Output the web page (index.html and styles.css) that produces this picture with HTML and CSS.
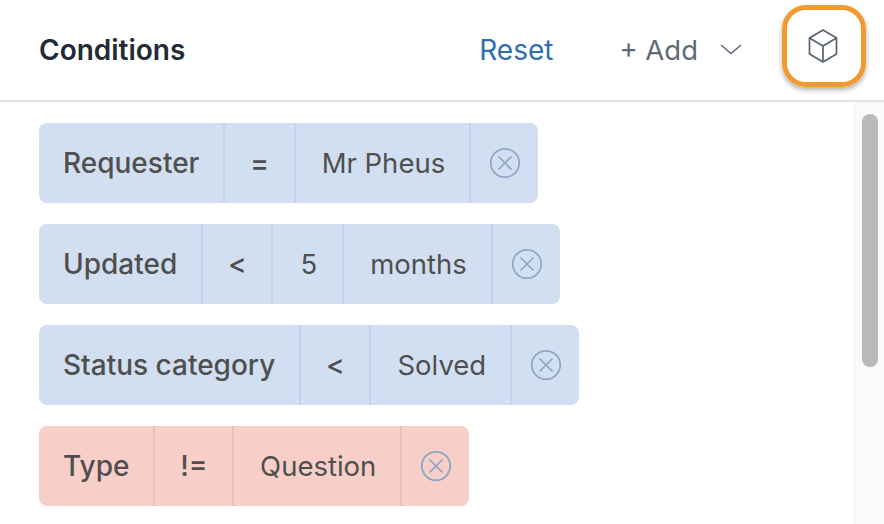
FILE: index.html
```html
<!DOCTYPE html>
<html lang="en">
<head>
  <meta charset="UTF-8">
  <title>Conditions</title>
  <link rel="stylesheet" href="styles.css">
</head>
<body>
  <div class="header">
    <h1 class="title">Conditions</h1>
    <a class="reset-btn">Reset</a>
    <a class="add-btn">+ Add</a>
    <svg class="chevron" width="24" height="14" viewBox="0 0 24 14"><path d="M2 2l10 8.5L22 2" fill="none" stroke="#5f6b76" stroke-width="1.6"/></svg>
    <div class="cube-btn">
      <svg width="32" height="34" viewBox="0 0 32 34" fill="none" stroke="#566472" stroke-width="1.7" stroke-linejoin="round">
        <path d="M16 1l13.5 8v16L16 33 2.500 25V9z"/>
        <path d="M2.500 9L16 17l13.500-8M16 17v16"/>
      </svg>
    </div>
  </div>

  <div class="body">
    <div class="conditions">
      <div class="condition">
        <span class="seg seg-field">Requester</span>
        <span class="seg seg-op">=</span>
        <span class="seg seg-value">Mr Pheus</span>
        <span class="seg seg-close"><svg width="32" height="32" viewBox="0 0 32 32" fill="none" stroke="#8ea7c4" stroke-width="1.700"><circle cx="16" cy="16" r="14.200"/><path d="M9.500 9.500l13 13M22.500 9.500l-13 13"/></svg></span>
      </div>
      <div class="condition">
        <span class="seg seg-field">Updated</span>
        <span class="seg seg-op">&lt;</span>
        <span class="seg seg-value seg-num">5</span>
        <span class="seg seg-value">months</span>
        <span class="seg seg-close"><svg width="32" height="32" viewBox="0 0 32 32" fill="none" stroke="#8ea7c4" stroke-width="1.700"><circle cx="16" cy="16" r="14.200"/><path d="M9.500 9.500l13 13M22.500 9.500l-13 13"/></svg></span>
      </div>
      <div class="condition">
        <span class="seg seg-field">Status category</span>
        <span class="seg seg-op">&lt;</span>
        <span class="seg seg-value">Solved</span>
        <span class="seg seg-close"><svg width="32" height="32" viewBox="0 0 32 32" fill="none" stroke="#8ea7c4" stroke-width="1.700"><circle cx="16" cy="16" r="14.200"/><path d="M9.500 9.500l13 13M22.500 9.500l-13 13"/></svg></span>
      </div>
      <div class="condition condition-red">
        <span class="seg seg-field">Type</span>
        <span class="seg seg-op">!=</span>
        <span class="seg seg-value">Question</span>
        <span class="seg seg-close"><svg width="32" height="32" viewBox="0 0 32 32" fill="none" stroke="#85a6c6" stroke-width="1.700"><circle cx="16" cy="16" r="14.200"/><path d="M9.500 9.500l13 13M22.500 9.500l-13 13"/></svg></span>
      </div>
    </div>
    <div class="scrollbar">
      <div class="scroll-thumb"></div>
    </div>
  </div>
</body>
</html>
```
FILE: styles.css
```css
html, body {
  height: 100%;
}

body {
  margin: 0;
  overflow: hidden;
  background: #fff;
  font-family: 'Inter', 'Liberation Sans', sans-serif;
  color: #4f4f4f;
}

.header {
  display: flex;
  align-items: center;
  height: 100px;
  padding: 0 18px 0 39px;
  border-bottom: 2px solid #e1e3e3;
}

.title {
  margin: 0 auto 0 0;
  font-size: 28px;
  font-weight: 600;
  color: #232c36;
}

.reset-btn {
  font-size: 28px;
  color: #2f6db5;
  margin-right: 66px;
}

.add-btn {
  font-size: 27.5px;
  color: #5f6b76;
  margin-right: 21px;
}

.chevron {
  margin-right: 39px;
}

.cube-btn {
  display: flex;
  align-items: center;
  justify-content: center;
  box-sizing: border-box;
  width: 84px;
  height: 82px;
  margin-top: -8px;
  padding-right: 2px;
  border: 5px solid #f09a32;
  border-radius: 24px;
  box-shadow: 0 3px 5px rgba(60, 60, 60, 0.4);
}

.body {
  display: flex;
}

.conditions {
  flex: 1;
  display: flex;
  flex-direction: column;
  align-items: flex-start;
  gap: 21px;
  padding: 21px 0 0 39px;
}

.condition {
  display: flex;
  align-items: stretch;
  height: 80px;
  background: #d2dff0;
  border-radius: 8px;
  font-size: 28px;
  --divider: #bdd3f0;
}

.condition-red {
  background: #f7cfc8;
  --divider: #e8c0b9;
}

.seg {
  display: flex;
  align-items: center;
  border-right: 2px solid var(--divider);
}

.seg-field {
  font-weight: 500;
  padding: 0 24px;
}

.seg-op {
  font-weight: 500;
  padding: 0 24.75px;
}

.seg-value {
  font-size: 27.5px;
  padding: 0 24px 0 26px;
}

.seg-num {
  padding: 0 25px 0 27px;
}

.seg-close {
  border-right: 0;
  padding: 0 17px 0 18px;
}

.scrollbar {
  width: 30px;
  height: 422px;
  background: #fafafa;
  border-left: 1px solid #f2f2f2;
  box-sizing: border-box;
  padding: 12px 6px 0 7px;
}

.scroll-thumb {
  height: 253px;
  background: #b9b9b9;
  border-radius: 8px;
}
```
